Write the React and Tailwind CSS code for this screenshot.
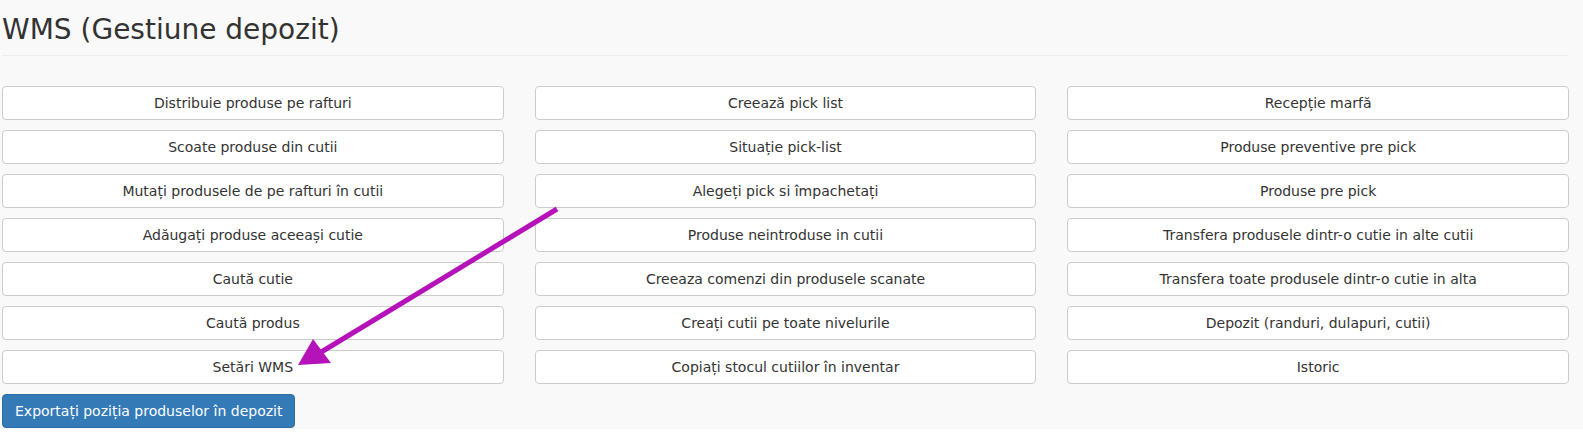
import React from 'react';

const columns = [
    [
        'Distribuie produse pe rafturi',
        'Scoate produse din cutii',
        'Mutați produsele de pe rafturi în cutii',
        'Adăugați produse aceeași cutie',
        'Caută cutie',
        'Caută produs',
        'Setări WMS',
    ],
    [
        'Creează pick list',
        'Situație pick-list',
        'Alegeți pick si împachetați',
        'Produse neintroduse in cutii',
        'Creeaza comenzi din produsele scanate',
        'Creați cutii pe toate nivelurile',
        'Copiați stocul cutiilor în inventar',
    ],
    [
        'Recepție marfă',
        'Produse preventive pre pick',
        'Produse pre pick',
        'Transfera produsele dintr-o cutie in alte cutii',
        'Transfera toate produsele dintr-o cutie in alta',
        'Depozit (randuri, dulapuri, cutii)',
        'Istoric',
    ],
];

// buttons are laid out row by row, so interleave the three columns
const buttons = columns[0].flatMap((_, i) => columns.map((col) => col[i]));

const App = () => {
    return (
        <div className="min-h-screen bg-white text-[#333] font-['DejaVu_Sans',sans-serif]">
            <div className="relative bg-[#f9f9f9] pl-[2px] pr-[14px] pb-[1px]">
                <div className="pt-[15px] pb-[9px] border-b border-[#eee]">
                    <h1 className="text-[28px] leading-[1.1] font-normal">WMS (Gestiune depozit)</h1>
                </div>

                <div className="mt-[30px] grid grid-cols-3 gap-x-[31px] gap-y-[10px]">
                    {buttons.map((label) => (
                        <button key={label} className="h-[34px] px-3 bg-white border border-[#ccc] rounded-[4px] text-[14px] leading-5 text-[#333] text-center">
                            {label}
                        </button>
                    ))}
                </div>

                <button className="mt-[10px] h-[34px] px-3 bg-[#337ab7] border border-[#2e6da4] rounded-[4px] text-[14px] leading-5 text-white">
                    Exportați poziția produselor în depozit
                </button>

                {/* annotation arrow pointing at the settings button */}
                <svg className="absolute inset-0 w-full h-full pointer-events-none" xmlns="http://www.w3.org/2000/svg">
                    <line x1="557" y1="209" x2="318" y2="354" stroke="#b512b9" strokeWidth="5" />
                    <polygon points="298,365 313,339 331,363" fill="#b512b9" />
                </svg>
            </div>
        </div>
    );
};

export default App;
